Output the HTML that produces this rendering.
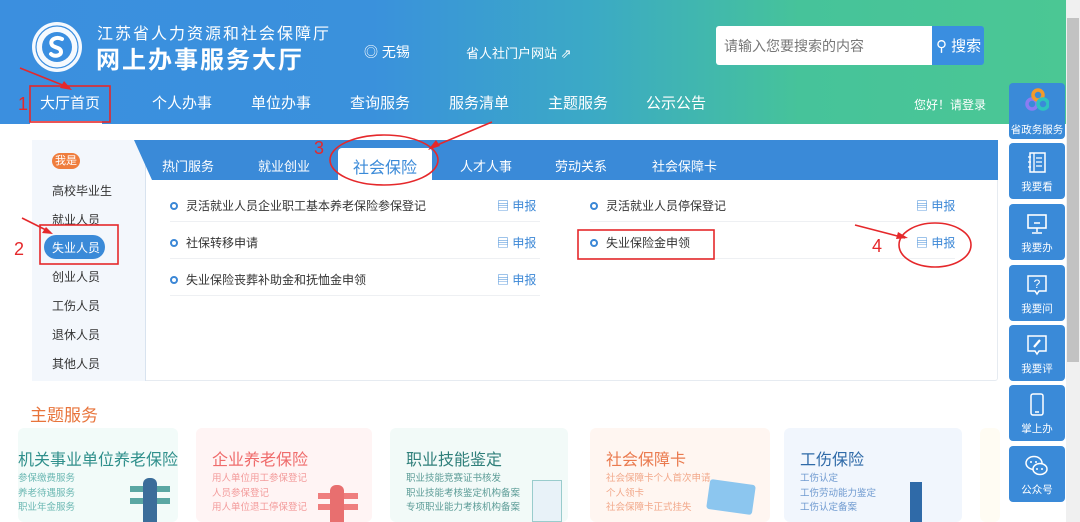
<!DOCTYPE html>
<html><head><meta charset="utf-8"><style>
*{margin:0;padding:0;box-sizing:border-box}
body{width:1080px;height:522px;overflow:hidden;background:#fff;font-family:"Liberation Sans","Noto Sans CJK SC",sans-serif;position:relative;color:#333}
.abs{position:absolute;white-space:nowrap}
#hdr{position:absolute;left:0;top:0;width:1066px;height:124px;background:linear-gradient(90deg,#3b8fdf 0%,#3a91dc 35%,#3ba9c6 55%,#46c39a 75%,#4bc794 100%)}
.nav{top:92px;font-size:15px;color:#fff}
.sb{position:absolute;left:1009px;width:56px;height:56px;background:#3a8ad8;border-radius:4px;color:#fff;font-size:10.5px;text-align:center}
.sb svg{position:absolute;left:17px;top:8px}
.sb span{position:absolute;top:36px;left:0;right:0}
.row{position:absolute;font-size:12px;color:#333}
.dot{display:inline-block;width:8px;height:8px;border:2px solid #3b87d6;border-radius:50%;margin-right:8px;vertical-align:0px}
.sep{position:absolute;height:1px;background:#eef0f3}
.rep{position:absolute;font-size:12px;color:#3b87d6}
.lm{position:absolute;left:52px;font-size:12px;color:#333}
.card{position:absolute;top:428px;height:94px;border-radius:6px}
.ct{position:absolute;top:18px;font-size:16px}
.cl{position:absolute;top:44px;font-size:9.5px;line-height:14.5px}
</style></head><body>
<div id="hdr"></div>
<svg class="abs" style="left:30px;top:20px" width="54" height="54" viewBox="0 0 54 54"><circle cx="27" cy="27" r="25" fill="#fff" opacity=".95"/><circle cx="27" cy="27" r="21" fill="none" stroke="#3a8ee0" stroke-width="1.2"/><circle cx="27" cy="27" r="15" fill="#3a8ee0"/><path d="M32 19c-6-3-13 1-10 6 2 3 9 2 9 7 0 4-7 5-10 2" stroke="#fff" stroke-width="4" fill="none" stroke-linecap="round"/></svg>
<div class="abs" style="left:97px;top:20px;font-size:16px;color:#fff;letter-spacing:2px">江苏省人力资源和社会保障厅</div>
<div class="abs" style="left:96px;top:40px;font-size:24px;font-weight:bold;color:#fff;letter-spacing:2px">网上办事服务大厅</div>
<div class="abs" style="left:364px;top:42px;font-size:14px;color:#fff">◎ 无锡</div>
<div class="abs" style="left:466px;top:43px;font-size:13px;color:#fff">省人社门户网站 ⇗</div>
<div class="abs" style="left:716px;top:26px;width:216px;height:39px;background:#fff;border-radius:3px 0 0 3px;font-size:14px;color:#777;padding:10px 8px">请输入您要搜索的内容</div>
<div class="abs" style="left:932px;top:26px;width:52px;height:39px;background:#3a8ee0;border-radius:0 3px 3px 0;font-size:15px;color:#fff;padding:9px 0 0 4px">⚲ 搜索</div>
<div class="abs nav" style="left:40px">大厅首页</div>
<div class="abs" style="left:30px;top:121px;width:72px;height:3px;background:#fff"></div>
<div class="abs nav" style="left:152px">个人办事</div>
<div class="abs nav" style="left:251px">单位办事</div>
<div class="abs nav" style="left:350px">查询服务</div>
<div class="abs nav" style="left:449px">服务清单</div>
<div class="abs nav" style="left:548px">主题服务</div>
<div class="abs nav" style="left:646px">公示公告</div>
<div class="abs" style="left:914px;top:96px;font-size:12px;color:#fff">您好！请登录</div>
<!-- scrollbar -->
<div class="abs" style="left:1066px;top:0;width:14px;height:522px;background:#f0f0f0"></div>
<div class="abs" style="left:1067px;top:18px;width:12px;height:344px;background:#c2c2c2"></div>
<!-- main panel -->
<div class="abs" style="left:32px;top:140px;width:966px;height:241px;border:1px solid #e6ebf1;border-radius:3px"></div>
<div class="abs" style="left:32px;top:140px;width:114px;height:241px;background:#f3f7fc;border-right:1px solid #d8e3ef"></div>
<div class="abs" style="left:52px;top:153px;width:28px;height:16px;background:#ef7d3d;border-radius:8px;color:#fff;font-size:11px;text-align:center;line-height:16px">我是</div>
<div class="lm" style="top:182px">高校毕业生</div>
<div class="lm" style="top:211px">就业人员</div>
<div class="abs" style="left:44px;top:235px;width:61px;height:24px;background:#3a8ad8;border-radius:12px;color:#fff;font-size:12px;padding:4px 0 0 8px">失业人员</div>
<div class="lm" style="top:268px">创业人员</div>
<div class="lm" style="top:297px">工伤人员</div>
<div class="lm" style="top:326px">退休人员</div>
<div class="lm" style="top:355px">其他人员</div>
<svg class="abs" style="left:134px;top:140px" width="864" height="41"><path d="M0 0H864V40H18Z" fill="#3a8ad8"/></svg>
<div class="abs" style="left:338px;top:148px;width:94px;height:33px;background:#fff;border-radius:4px 4px 0 0;color:#3a8ad8;font-size:16px;text-align:center;padding-top:6px">社会保险</div>
<div class="abs" style="left:162px;top:156px;font-size:13px;color:#fff">热门服务</div>
<div class="abs" style="left:258px;top:156px;font-size:13px;color:#fff">就业创业</div>
<div class="abs" style="left:460px;top:156px;font-size:13px;color:#fff">人才人事</div>
<div class="abs" style="left:555px;top:156px;font-size:13px;color:#fff">劳动关系</div>
<div class="abs" style="left:652px;top:156px;font-size:13px;color:#fff">社会保障卡</div>
<div class="row" style="left:170px;top:197px"><span class="dot"></span>灵活就业人员企业职工基本养老保险参保登记</div>
<div class="row" style="left:170px;top:234px"><span class="dot"></span>社保转移申请</div>
<div class="row" style="left:170px;top:271px"><span class="dot"></span>失业保险丧葬补助金和抚恤金申领</div>
<div class="row" style="left:590px;top:197px"><span class="dot"></span>灵活就业人员停保登记</div>
<div class="row" style="left:590px;top:234px"><span class="dot"></span>失业保险金申领</div>
<div class="rep" style="left:497px;top:197px">▤ 申报</div>
<div class="rep" style="left:497px;top:234px">▤ 申报</div>
<div class="rep" style="left:497px;top:271px">▤ 申报</div>
<div class="rep" style="left:916px;top:197px">▤ 申报</div>
<div class="rep" style="left:916px;top:234px">▤ 申报</div>
<div class="sep" style="left:170px;top:221px;width:370px"></div>
<div class="sep" style="left:170px;top:258px;width:370px"></div>
<div class="sep" style="left:170px;top:295px;width:370px"></div>
<div class="sep" style="left:590px;top:221px;width:365px"></div>
<div class="sep" style="left:590px;top:258px;width:365px"></div>
<!-- sidebar -->
<div class="sb" style="top:83px"><svg width="24" height="24" style="left:16px;top:5px"><circle cx="7" cy="16" r="5" fill="none" stroke="#8a7cf2" stroke-width="3.5"/><circle cx="13" cy="7" r="5" fill="none" stroke="#f39a2b" stroke-width="3.5"/><circle cx="18" cy="16" r="5" fill="none" stroke="#2ec3c0" stroke-width="3.5"/></svg><span style="top:39px">省政务服务</span></div>
<div class="sb" style="top:143px"><svg width="22" height="24"><rect x="4" y="2" width="15" height="19" fill="none" stroke="#fff" stroke-width="1.5"/><path d="M8 2v19M10 7h6M10 11h6M10 15h6M2 6h3M2 11h3M2 16h3" stroke="#fff" stroke-width="1.3"/></svg><span>我要看</span></div>
<div class="sb" style="top:204px"><svg width="22" height="24"><rect x="2" y="3" width="18" height="13" fill="none" stroke="#fff" stroke-width="1.6"/><path d="M11 16v4M6 21h10M8 11h6" stroke="#fff" stroke-width="1.5"/></svg><span>我要办</span></div>
<div class="sb" style="top:265px"><svg width="22" height="24"><path d="M2 3h18v15h-7l-2 3-2-3H2z" fill="none" stroke="#fff" stroke-width="1.5"/><text x="11" y="15" fill="#fff" font-size="12" text-anchor="middle" font-family="Liberation Sans">?</text></svg><span>我要问</span></div>
<div class="sb" style="top:325px"><svg width="22" height="24"><path d="M2 3h18v15h-7l-2 3-2-3H2z" fill="none" stroke="#fff" stroke-width="1.5"/><path d="M8 14l6-7" stroke="#fff" stroke-width="2.2"/></svg><span>我要评</span></div>
<div class="sb" style="top:385px"><svg width="22" height="24"><rect x="5" y="1" width="12" height="21" rx="2" fill="none" stroke="#fff" stroke-width="1.5"/><path d="M9 19h4" stroke="#fff" stroke-width="1.5"/></svg><span>掌上办</span></div>
<div class="sb" style="top:446px"><svg width="24" height="24" style="left:16px"><ellipse cx="9" cy="9" rx="8" ry="6.5" fill="#3a8ad8" stroke="#fff" stroke-width="1.5"/><ellipse cx="15" cy="15" rx="7" ry="5.5" fill="#3a8ad8" stroke="#fff" stroke-width="1.5"/><circle cx="12" cy="15" r="1" fill="#fff"/><circle cx="17" cy="15" r="1" fill="#fff"/><circle cx="6" cy="8" r="1" fill="#fff"/><circle cx="11" cy="8" r="1" fill="#fff"/></svg><span>公众号</span></div>
<!-- theme -->
<div class="abs" style="left:30px;top:401px;font-size:17px;color:#e8743b">主题服务</div>
<div class="card" style="left:18px;width:160px;background:#f2fbf9"><div class="ct" style="left:0;color:#2f8f8b">机关事业单位养老保险</div><div class="cl" style="left:0;color:#6cb8b3">参保缴费服务<br>养老待遇服务<br>职业年金服务</div></div>
<div class="card" style="left:196px;width:176px;background:#fff4f4"><div class="ct" style="left:16px;color:#ef6b6b">企业养老保险</div><div class="cl" style="left:16px;color:#f39b9b">用人单位用工参保登记<br>人员参保登记<br>用人单位退工停保登记</div></div>
<div class="card" style="left:390px;width:178px;background:#f2faf8"><div class="ct" style="left:16px;color:#2f7f7a">职业技能鉴定</div><div class="cl" style="left:16px;color:#5c9c97">职业技能竞赛证书核发<br>职业技能考核鉴定机构备案<br>专项职业能力考核机构备案</div></div>
<div class="card" style="left:590px;width:180px;background:#fff6f1"><div class="ct" style="left:16px;color:#ea7a4e">社会保障卡</div><div class="cl" style="left:16px;color:#f2a88a">社会保障卡个人首次申请<br>个人领卡<br>社会保障卡正式挂失</div></div>
<div class="card" style="left:784px;width:178px;background:#f1f6fd"><div class="ct" style="left:16px;color:#2f6aa8">工伤保险</div><div class="cl" style="left:16px;color:#6f9ad0">工伤认定<br>工伤劳动能力鉴定<br>工伤认定备案</div></div>
<div class="card" style="left:980px;width:20px;background:#fffcf3"></div>
<!-- figures -->
<div class="abs" style="left:130px;top:486px;width:40px;height:6px;background:#5aa7a3"></div>
<div class="abs" style="left:130px;top:498px;width:40px;height:6px;background:#5aa7a3"></div>
<div class="abs" style="left:143px;top:478px;width:14px;height:44px;background:#3b6d9a;border-radius:6px 6px 0 0"></div>
<div class="abs" style="left:318px;top:493px;width:40px;height:6px;background:#ef7e7e"></div>
<div class="abs" style="left:318px;top:504px;width:40px;height:6px;background:#ef7e7e"></div>
<div class="abs" style="left:330px;top:485px;width:14px;height:37px;background:#e86f6f;border-radius:6px 6px 0 0"></div>
<div class="abs" style="left:532px;top:480px;width:30px;height:42px;background:#e8f2f8;border:1px solid #9cc"></div>
<div class="abs" style="left:708px;top:482px;width:46px;height:30px;background:#8cc6ef;border-radius:3px;transform:rotate(8deg)"></div>
<div class="abs" style="left:910px;top:482px;width:12px;height:40px;background:#2f6aa8"></div>
<!-- annotations -->
<svg class="abs" style="left:0;top:0" width="1080" height="522">
<g stroke="#e5282b" fill="none" stroke-width="1.6">
<rect x="30" y="86" width="80" height="36"/>
<rect x="40" y="225" width="78" height="39"/>
<rect x="578" y="230" width="136" height="29"/>
<ellipse cx="384" cy="160" rx="54" ry="25"/>
<ellipse cx="935" cy="245" rx="36" ry="22"/>
<path d="M20 68L70 88M492 122L430 148M22 218L50 232M855 225L905 238"/>
</g>
<g fill="#e5282b"><path d="M72 90l-12-2 4-7z"/><path d="M428 150l8-10 4 6z"/><path d="M53 234l-11-1 4-6z"/><path d="M908 238l-12 1 2-7z"/></g>
<g fill="#e5282b" font-size="18" font-family="Liberation Sans"><text x="18" y="110">1</text><text x="14" y="255">2</text><text x="314" y="154">3</text><text x="872" y="252">4</text></g>
</svg>
</body></html>
